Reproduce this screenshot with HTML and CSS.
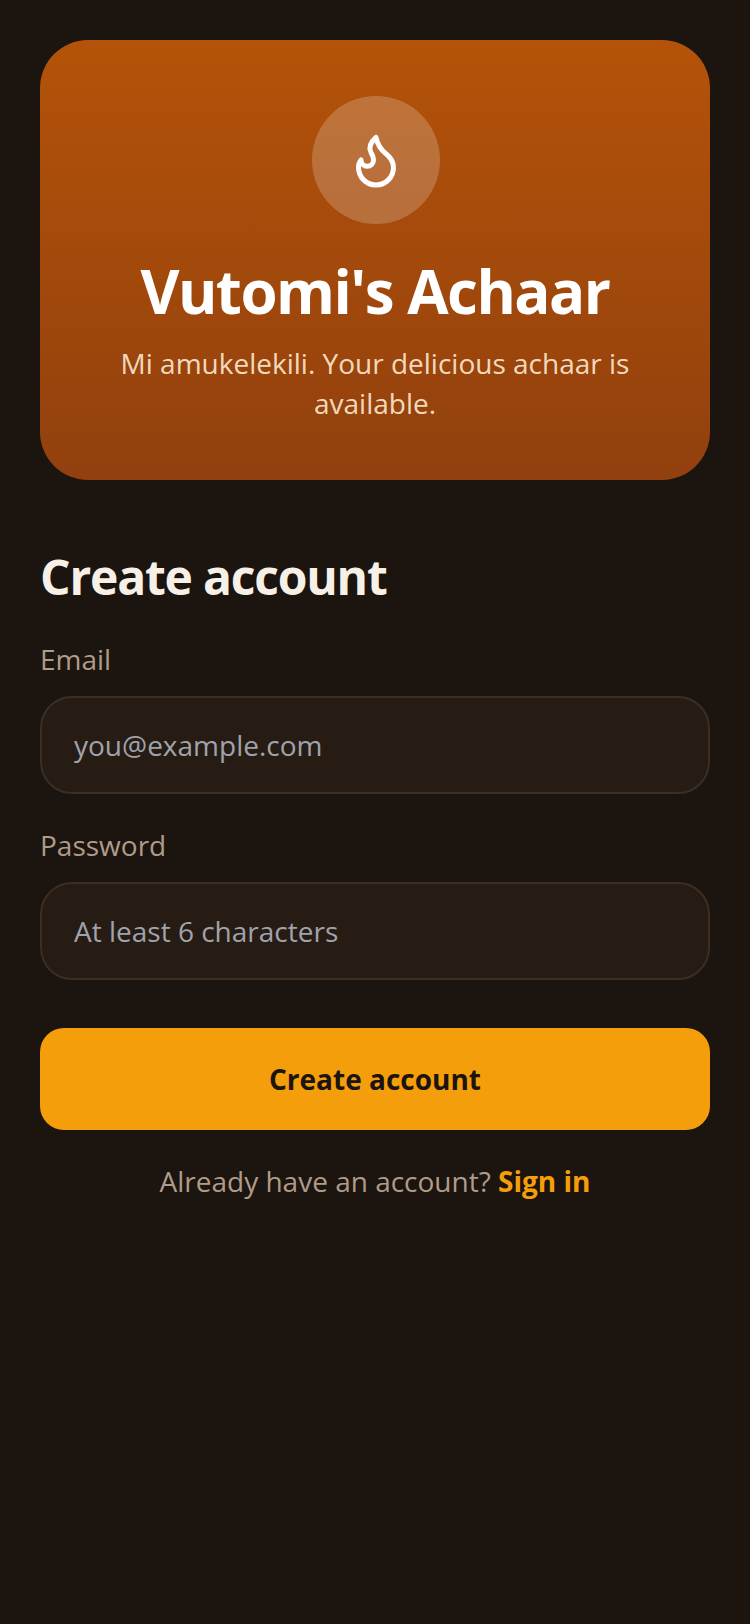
FILE: index.html
```html
<!DOCTYPE html>
<html lang="en">
<head>
<meta charset="utf-8">
<title>Vutomi's Achaar</title>
<link rel="stylesheet" href="styles.css">
</head>
<body>
<main class="page">
  <section class="hero">
    <div class="hero-icon">
      <svg class="flame" viewBox="0 0 24 24" fill="none" stroke="currentColor" stroke-width="2" stroke-linecap="round" stroke-linejoin="round"><path d="M8.5 14.5A2.5 2.5 0 0 0 11 12c0-1.38-.5-2-1-3-1.072-2.143-.224-4.054 2-6 .5 2.5 2 4.9 4 6.5 2 1.6 3 3.5 3 5.5a7 7 0 1 1-14 0c0-1.153.433-2.294 1-3a2.5 2.5 0 0 0 2.5 2.5z"/></svg>
    </div>
    <h1 class="hero-title">Vutomi's Achaar</h1>
    <p class="hero-sub">Mi amukelekili. Your delicious achaar is available.</p>
  </section>
  <form class="form">
    <h2 class="form-title">Create account</h2>
    <label class="field">
      <span class="field-label">Email</span>
      <input class="field-input" type="email" placeholder="you@example.com">
    </label>
    <label class="field">
      <span class="field-label">Password</span>
      <input class="field-input" type="password" placeholder="At least 6 characters">
    </label>
    <button class="submit" type="button">Create account</button>
    <p class="switch">Already have an account? <a class="switch-link" href="#">Sign in</a></p>
  </form>
</main>
</body>
</html>
```
FILE: styles.css
```css
* { box-sizing: border-box; }
html, body { margin: 0; height: 100%; }
body {
  background: #1b140f;
  font-family: "Open Sans", "Noto Sans", sans-serif;
  color: #f7f0e6;
}
.page {
  padding: 40px;
  min-height: 1624px;
}
.hero {
  display: flex;
  flex-direction: column;
  align-items: center;
  padding: 56px 40px 57px;
  border-radius: 48px;
  background: linear-gradient(180deg, #b45309, #92400e);
  text-align: center;
}
.hero-icon {
  width: 128px;
  height: 128px;
  margin-left: 2px;
  border-radius: 50%;
  background: rgba(255, 255, 255, 0.2);
  display: flex;
  align-items: center;
  justify-content: center;
  color: #fff;
}
.flame { width: 60px; height: 60px; display: block; }
.hero-title {
  margin: 25px 0 0;
  font-size: 60px;
  line-height: 84px;
  font-weight: 700;
  color: #fff;
  letter-spacing: -1.5px;
}
.hero-sub {
  margin: 10px 0 0;
  font-size: 28px;
  line-height: 40px;
  color: rgba(255, 237, 213, 0.9);
}
.form { display: flex; flex-direction: column; margin-top: 65px; }
.form-title {
  margin: 0 0 30px;
  font-size: 48px;
  line-height: 64px;
  font-weight: 700;
  color: #f7f0e6;
  letter-spacing: -1.2px;
}
.field { display: flex; flex-direction: column; margin-bottom: 31px; }
.field-label {
  font-size: 28px;
  line-height: 40px;
  color: #af9c88;
  margin-bottom: 17px;
}
.field-input {
  height: 98px;
  padding: 0 32px;
  border: 2px solid #3a2e25;
  border-radius: 32px;
  background: #261c14;
  font: inherit;
  font-size: 28px;
  color: #f7f0e6;
  outline: none;
}
.field-input::placeholder { color: #a0a3ab; opacity: 1; }
.submit {
  height: 102px;
  margin-top: 17px;
  border: 0;
  border-radius: 24px;
  background: #f59e0b;
  color: #1b140f;
  font: inherit;
  font-size: 28px;
  font-weight: 700;
}
.switch {
  margin: 31px 0 0;
  text-align: center;
  font-size: 28px;
  line-height: 40px;
  color: #af9c88;
}
.switch-link { color: #f59e0b; font-weight: 700; text-decoration: none; }
```
